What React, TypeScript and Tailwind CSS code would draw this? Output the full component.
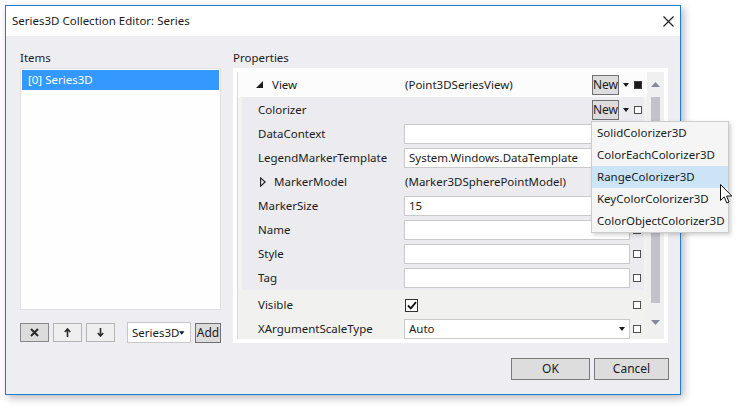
import React from "react";

const Square = ({ filled }: { filled?: boolean }) => (
  <div className={filled ? "w-[8px] h-[8px] border border-[#3c3c3c] bg-[#1a1a1a]" : "w-[8px] h-[8px] border border-[#4f4f4f] bg-white"} />
);

const DropArrow = () => (
  <svg width="6" height="4" viewBox="0 0 6 4">
    <path d="M0 0 L6 0 L3 4 Z" fill="#1a1a1a" />
  </svg>
);

const NewButton = () => (
  <div className="w-[27px] h-[20px] border border-[#707070] bg-[#dddddd] flex items-center justify-center leading-none text-[12px]">New</div>
);

const TextBox = ({ value, combo }: { value?: string; combo?: boolean }) => (
  <div className="w-[226px] h-[20px] border border-[#cacaca] bg-white pl-[4px] pr-[4px] flex items-center justify-between leading-none">
    <span>{value}</span>
    {combo && <DropArrow />}
  </div>
);

const NestedRow = ({ label, children }: { label: React.ReactNode; children?: React.ReactNode }) => (
  <div className="h-[24px] flex items-center">
    <div className="w-[162px] pl-[16px] flex items-center">{label}</div>
    <TextBox value={typeof children === "string" ? children : undefined} />
    <div className="w-[14px] flex justify-center">
      <Square />
    </div>
  </div>
);

const items = ["SolidColorizer3D", "ColorEachColorizer3D", "RangeColorizer3D", "KeyColorColorizer3D", "ColorObjectColorizer3D"];

export default function App() {
  return (
    <div className="relative w-[743px] h-[410px] bg-white overflow-hidden font-['Noto_Sans',sans-serif] text-[11.5px] text-[#1b1b1b]">
      <div className="pl-[5px] pt-[5px]">
        <div className="w-[676px] h-[390px] border border-[#1a7fd4] bg-[#eeedf2] flex flex-col shadow-[3px_3px_8px_rgba(0,0,0,0.28)]">
          {/* title bar */}
          <div className="h-[30px] bg-white flex items-center justify-between pl-[6px] pr-[6px]">
            <span>Series3D Collection Editor: Series</span>
            <svg width="11" height="11" viewBox="0 0 11 11">
              <path d="M0.5 0.5 L10.5 10.5 M10.5 0.5 L0.5 10.5" stroke="#1a1a1a" strokeWidth="1.1" />
            </svg>
          </div>

          {/* body */}
          <div className="flex-1 flex flex-col pl-[14px] pr-[11px] pt-[12px]">
            <div className="flex gap-[12px]">
              {/* items column */}
              <div className="w-[201px] flex flex-col">
                <div className="h-[20px] leading-[19px]">Items</div>
                <div className="h-[242px] bg-[#fefefe] border border-[#e0e0e0] p-[1px]">
                  <div className="h-[20px] bg-[#3399ff] text-white pl-[6px] flex items-center">[0] Series3D</div>
                </div>
                <div className="mt-[12px] flex items-center">
                  <div className="w-[29px] h-[19px] border border-[#888888] bg-[#dcdcdc] flex items-center justify-center">
                    <svg width="9" height="9" viewBox="0 0 9 9">
                      <path d="M1 1 L8 8 M8 1 L1 8" stroke="#2a2a2a" strokeWidth="2" />
                    </svg>
                  </div>
                  <div className="ml-[4px] w-[29px] h-[19px] border border-[#b4b4b4] bg-[#efefef] flex items-center justify-center">
                    <svg width="7" height="9" viewBox="0 0 7 9">
                      <path d="M3.5 9 L3.5 1.5 M0.8 4 L3.5 1 L6.2 4" stroke="#2a2a2a" strokeWidth="1.6" fill="none" />
                    </svg>
                  </div>
                  <div className="ml-[4px] w-[29px] h-[19px] border border-[#b4b4b4] bg-[#efefef] flex items-center justify-center">
                    <svg width="7" height="9" viewBox="0 0 7 9">
                      <path d="M3.5 0 L3.5 7.5 M0.8 5 L3.5 8 L6.2 5" stroke="#2a2a2a" strokeWidth="1.6" fill="none" />
                    </svg>
                  </div>
                  <div className="ml-[12px] w-[64px] h-[21px] border border-[#c8c8c8] bg-white pl-[4px] pr-[5px] flex items-center justify-between">
                    <span>Series3D</span>
                    <DropArrow />
                  </div>
                  <div className="ml-[4px] w-[26px] h-[20px] border border-[#707070] bg-[#dcdcdc] flex items-center justify-center text-[12px]">Add</div>
                </div>
              </div>

              {/* properties column */}
              <div className="w-[435px] flex flex-col">
                <div className="h-[20px] leading-[19px]">Properties</div>
                <div className="h-[275px] bg-white p-[4px]">
                  <div className="h-[267px] flex border-l border-[#dadada]">
                    <div className="w-[409px] bg-[#f3f3f2] flex flex-col">
                      {/* View row */}
                      <div className="h-[25px] bg-[#fcfcfc] flex items-center">
                        <div className="w-[166px] pl-[18px] flex items-center gap-[9px]">
                          <svg width="7" height="7" viewBox="0 0 7 7">
                            <path d="M7 0 L7 7 L0 7 Z" fill="#1e1e1e" />
                          </svg>
                          <span>View</span>
                        </div>
                        <div className="w-[188px] pl-[1px]">(Point3DSeriesView)</div>
                        <NewButton />
                        <div className="ml-[4px]"><DropArrow /></div>
                        <div className="ml-[5px]"><Square filled /></div>
                      </div>
                      {/* nested */}
                      <div className="ml-[4px] w-[402px] bg-[#ebebf0] pt-[1px] flex flex-col">
                        <div className="h-[24px] flex items-center">
                          <div className="w-[162px] pl-[16px]">Colorizer</div>
                          <div className="w-[188px]" />
                          <NewButton />
                          <div className="ml-[4px]"><DropArrow /></div>
                          <div className="ml-[5px]"><Square /></div>
                        </div>
                        <NestedRow label="DataContext" />
                        <NestedRow label="LegendMarkerTemplate">System.Windows.DataTemplate</NestedRow>
                        <div className="h-[24px] flex items-center">
                          <div className="w-[162px] pl-[18px] flex items-center gap-[8px]">
                            <svg width="6" height="10" viewBox="0 0 6 10">
                              <path d="M0.6 0.8 L5.2 5 L0.6 9.2 Z" fill="none" stroke="#1e1e1e" strokeWidth="1.1" />
                            </svg>
                            <span>MarkerModel</span>
                          </div>
                          <div className="pl-[1px]">(Marker3DSpherePointModel)</div>
                        </div>
                        <NestedRow label="MarkerSize">15</NestedRow>
                        <NestedRow label="Name" />
                        <NestedRow label="Style" />
                        <NestedRow label="Tag" />
                      </div>
                      {/* bottom rows */}
                      <div className="bg-[#f1f2ef] pt-[2px] flex-1 flex flex-col">
                        <div className="h-[26px] flex items-center">
                          <div className="w-[166px] pl-[20px]">Visible</div>
                          <div className="w-[226px]">
                            <div className="ml-[1px] w-[13px] h-[13px] border border-[#333333] bg-white flex items-center justify-center">
                              <svg width="10" height="9" viewBox="0 0 10 9">
                                <path d="M1 4.5 L3.8 7.3 L9 1.2" stroke="#111111" strokeWidth="1.8" fill="none" />
                              </svg>
                            </div>
                          </div>
                          <div className="w-[14px] flex justify-center"><Square /></div>
                        </div>
                        <div className="h-[21px] flex items-center">
                          <div className="w-[166px] pl-[20px]">XArgumentScaleType</div>
                          <TextBox value="Auto" combo />
                          <div className="w-[14px] flex justify-center"><Square /></div>
                        </div>
                      </div>
                    </div>
                    {/* scrollbar */}
                    <div className="w-[17px] bg-[#f0f0f0] flex flex-col items-center">
                      <div className="h-[25px] flex items-center justify-center">
                        <svg width="9" height="5" viewBox="0 0 9 5">
                          <path d="M0 5 L4.5 0 L9 5 Z" fill="#868999" />
                        </svg>
                      </div>
                      <div className="w-[9px] h-[206px] bg-[#c2c3c9]" />
                      <div className="flex-1 flex items-center justify-center pt-[2px]">
                        <svg width="9" height="5" viewBox="0 0 9 5">
                          <path d="M0 0 L9 0 L4.5 5 Z" fill="#868999" />
                        </svg>
                      </div>
                    </div>
                  </div>
                </div>
              </div>
            </div>

            {/* OK / Cancel */}
            <div className="mt-[15px] flex justify-end gap-[4px]">
              <div className="w-[79px] h-[22px] border border-[#7a7a7a] bg-[#dddddd] flex items-center justify-center text-[12px]">OK</div>
              <div className="w-[75px] h-[22px] border border-[#7a7a7a] bg-[#dddddd] flex items-center justify-center text-[12px]">Cancel</div>
            </div>
          </div>
        </div>
      </div>

      {/* dropdown popup */}
      <div className="absolute left-[591px] top-[121px] w-[138px] h-[112px] bg-[#f5f5f5] border border-[#cccccc] shadow-[2px_2px_4px_rgba(0,0,0,0.18)] flex flex-col">
        {items.map((it) => (
          <div key={it} className={it === "RangeColorizer3D" ? "h-[22px] bg-[#cce4f7] pl-[5px] flex items-center" : "h-[22px] pl-[5px] flex items-center"}>
            {it}
          </div>
        ))}
      </div>

      {/* mouse cursor */}
      <svg className="absolute left-[720px] top-[184px]" width="13" height="21" viewBox="0 0 13 21">
        <path d="M0.5 0.5 L0.5 16.5 L4.2 12.8 L6.8 19 L9 18 L6.5 12 L11.8 12 Z" fill="white" stroke="#111111" strokeWidth="1" strokeLinejoin="round" />
      </svg>
    </div>
  );
}
